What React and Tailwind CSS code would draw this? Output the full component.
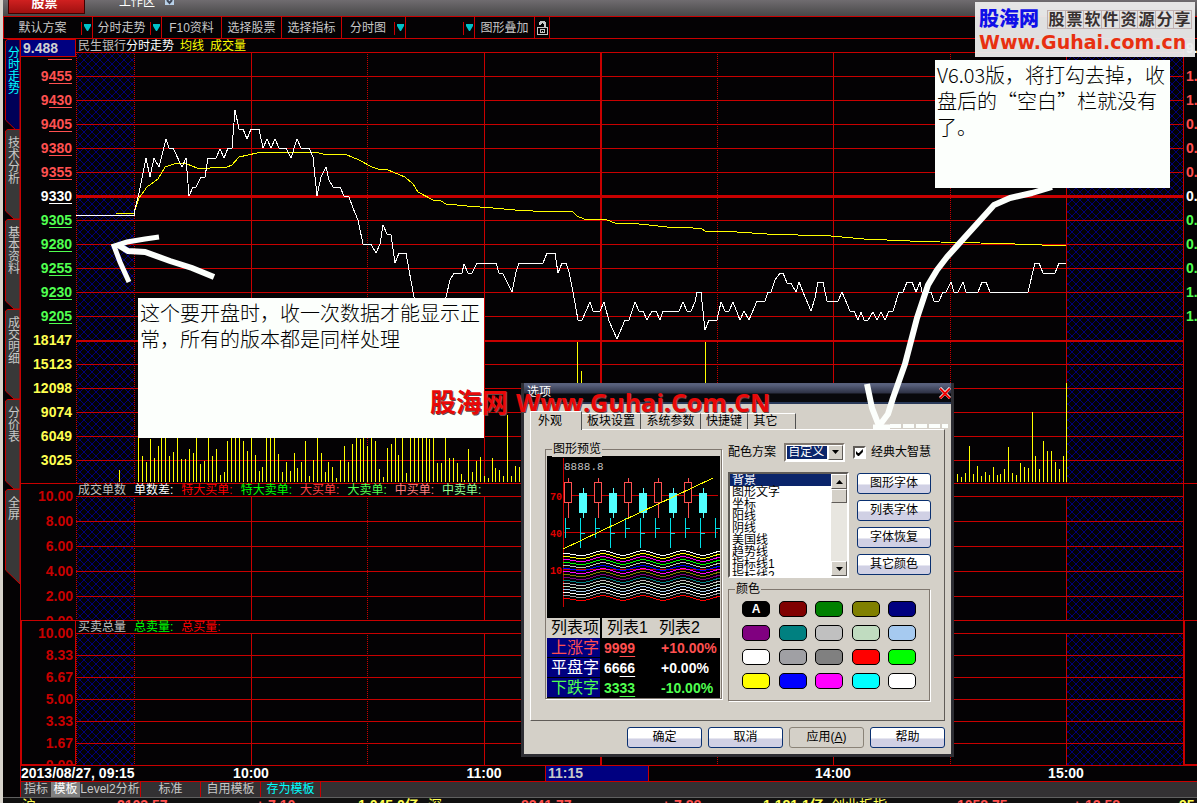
const RED = '#c80000';

const TOOLBAR = [
  { label: '默认方案', width: 'w-[89px]', menu: true },
  { label: '分时走势', width: 'w-[69px]', menu: true },
  { label: 'F10资料', width: 'w-[60px]' },
  { label: '选择股票', width: 'w-[60px]' },
  { label: '选择指标', width: 'w-[60px]' },
  { label: '分时图', width: 'w-[64px]', menu: true },
  { label: '', width: 'w-[69px]', menu: true },
  { label: '图形叠加', width: 'w-[60px]' },
];

const SIDE_TABS = ['分时走势', '技术分析', '基本资料', '成交明细', '分价表', '全屏'];

const UP = 'text-[#ff5050]';
const DOWN = 'text-[#50ff50]';

const PRICES = [
  { value: '9455', change: '1.', color: UP },
  { value: '9430', change: '1.', color: UP },
  { value: '9405', change: '0.', color: UP },
  { value: '9380', change: '0.', color: UP },
  { value: '9355', change: '0.', color: UP },
  { value: '9330', change: '0.', color: 'text-white' },
  { value: '9305', change: '0.', color: DOWN },
  { value: '9280', change: '0.', color: DOWN },
  { value: '9255', change: '0.', color: DOWN },
  { value: '9230', change: '1.', color: DOWN },
  { value: '9205', change: '1.', color: DOWN },
];

const VOLUMES = ['18147', '15123', '12098', '9074', '6049', '3025'];

const ORDER_LEGEND = [
  { label: '单数差:', color: 'text-white' },
  { label: '特大买单:', color: 'text-[#ff0000]' },
  { label: '特大卖单:', color: 'text-[#00ff00]' },
  { label: '大买单:', color: 'text-[#ff4040]' },
  { label: '大卖单:', color: 'text-[#50ff50]' },
  { label: '中买单:', color: 'text-[#ff8080]' },
  { label: '中卖单:', color: 'text-[#90ff90]' },
];

const TOTAL_LEGEND = [
  { label: '总卖量:', color: 'text-[#00ff00]' },
  { label: '总买量:', color: 'text-[#ff0000]' },
];

const PRICE_LINE =
  '76,215 134,215 134,213 139,193 146,158 150,177 154,158 159,167 161,159 166,139 169,148 173,148 182,167 186,158 189,196 193,187 196,187 201,177 205,177 208,158 216,158 220,149 224,158 228,148 232,148 235,110 239,129 243,129 247,139 251,129 259,129 263,148 267,139 271,148 275,139 279,148 286,148 291,158 297,139 301,148 309,148 313,157 317,196 321,177 326,167 329,180 333,187 340,187 344,196 349,197 353,208 358,220 363,244 371,244 376,253 380,244 383,225 387,234 391,235 395,263 399,253 406,253 409,270 414,297 420,330 440,330 446,297 450,280 454,273 462,273 464,264 468,273 472,273 477,263 496,263 499,273 503,274 512,292 516,272 519,263 543,263 547,253 555,253 558,273 562,263 566,263 569,272 573,292 578,320 582,320 586,311 590,302 593,311 600,311 604,302 609,321 617,339 625,320 629,320 635,302 639,311 643,311 647,320 652,311 656,311 660,320 663,311 679,311 683,302 687,311 691,311 695,302 697,292 701,292 705,330 709,320 717,320 721,302 725,311 729,311 733,302 740,320 744,311 749,320 757,301 765,301 768,292 771,292 775,280 780,273 783,273 787,283 791,283 796,292 799,282 803,292 811,311 815,298 818,282 823,282 827,301 838,301 842,292 850,311 854,311 858,320 861,312 864,320 868,320 873,312 877,320 881,312 885,320 889,311 893,311 899,292 903,292 907,282 912,282 916,292 920,282 923,297 928,292 931,292 934,301 939,301 943,292 946,292 951,282 954,292 958,292 963,282 966,292 978,292 982,282 986,282 990,292 1028,292 1035,263 1039,263 1043,273 1055,273 1059,263 1066,263';

const AVERAGE_LINE =
  '116,214 134,213 139,198 147,187 158,179 165,167 177,163 187,164 197,168 205,169 216,167 227,167 232,165 239,157 257,153 277,152 315,152 323,154 347,155 359,160 372,167 378,169 388,170 400,175 405,177 413,184 418,192 433,200 441,201 446,204 467,206 493,208 515,210 533,211 572,211 577,216 584,219 607,220 615,223 630,223 667,227 693,228 702,229 705,231 737,232 767,234 798,235 820,235 864,239 910,241 940,242 980,243 1015,244 1042,245 1066,245';

// [x, top] of every volume bar
const VOLUME_BARS = [
  [119, 470], [138, 430], [142, 456], [146, 462], [150, 439], [154, 458], [158, 446], [161, 430], [165, 430],
  [169, 456], [173, 452], [177, 430], [181, 459], [185, 459], [189, 449], [193, 453], [196, 430], [200, 464],
  [204, 461], [208, 430], [212, 456], [216, 449], [220, 475], [224, 472], [227, 441], [231, 430], [235, 430],
  [239, 430], [243, 441], [247, 451], [251, 430], [255, 455], [259, 471], [262, 467], [266, 430], [270, 430],
  [274, 430], [278, 454], [282, 472], [286, 462], [290, 471], [294, 453], [297, 468], [301, 462], [305, 441],
  [309, 476], [313, 460], [317, 430], [321, 453], [325, 472], [328, 462], [332, 467], [336, 478], [340, 460],
  [344, 446], [348, 462], [352, 444], [356, 430], [360, 439], [363, 430], [367, 446], [371, 430], [375, 441],
  [379, 469], [383, 477], [387, 448], [391, 444], [395, 430], [398, 455], [402, 430], [406, 473], [410, 430],
  [414, 430], [418, 430], [422, 430], [426, 430], [429, 439], [433, 430], [437, 463], [441, 463], [445, 430],
  [449, 458], [453, 458], [457, 463], [461, 474], [464, 480], [468, 449], [472, 472], [476, 461], [480, 457],
  [484, 476], [488, 478], [492, 458], [495, 468], [499, 470], [503, 476], [507, 415], [511, 476], [515, 466],
  [519, 467], [577, 342], [581, 371], [705, 342], [957, 474], [961, 477], [965, 473], [969, 446], [973, 474],
  [977, 466], [981, 476], [985, 472], [989, 475], [993, 467], [997, 475], [1000, 474], [1004, 469], [1008, 447],
  [1012, 473], [1016, 475], [1020, 463], [1024, 467], [1028, 468], [1032, 412], [1035, 456], [1039, 469],
  [1043, 441], [1047, 451], [1051, 451], [1055, 462], [1059, 469], [1063, 456], [1066, 383],
];

const WAVE_COLORS = [
  '#ffffff', '#ffff00', '#ff00ff', '#00ff00', '#c0c0c0', '#0000ff', '#ff00ff', '#808000',
  '#800080', '#008080', '#c0c0c0', '#c0dcc0', '#a6caf0', '#ffffff', '#a0a0a4', '#ff0000',
];

const LIST_ITEMS = ['背景', '图形文字', '坐标', '阳线', '阴线', '美国线', '趋势线', '指标线1', '指标线2'];

const SWATCHES = [
  'bg-black', 'bg-[#800000]', 'bg-[#008000]', 'bg-[#808000]', 'bg-[#000080]',
  'bg-[#800080]', 'bg-[#008080]', 'bg-[#c0c0c0]', 'bg-[#c0dcc0]', 'bg-[#a6caf0]',
  'bg-white', 'bg-[#a0a0a4]', 'bg-[#808080]', 'bg-[#ff0000]', 'bg-[#00ff00]',
  'bg-[#ffff00]', 'bg-[#0000ff]', 'bg-[#ff00ff]', 'bg-[#00ffff]', 'bg-white',
];

const SAMPLE_ROWS = [
  { label: '上涨字', value: '9999', rate: '+10.00%', color: UP },
  { label: '平盘字', value: '6666', rate: '+0.00%', color: 'text-white' },
  { label: '下跌字', value: '3333', rate: '-10.00%', color: DOWN },
];

function Underlined({ value }) {
  return (
    <span className="flex leading-[14px]">
      {value.slice(0, -3)}
      <span className="border-b border-current">{value.slice(-3)}</span>
    </span>
  );
}

function Grid({ id, top, height, rows, children }) {
  const bottom = top + height;
  return (
    <svg
      viewBox={`76 ${top} 1107 ${height}`}
      preserveAspectRatio="none"
      shapeRendering="crispEdges"
      className="block w-full"
      height={height}
      aria-hidden="true"
    >
      <defs>
        <pattern id={id} width="8" height="8" patternUnits="userSpaceOnUse">
          <path d="M0 0L8 8M8 0L0 8" stroke="#000078" strokeWidth="1" fill="none" />
        </pattern>
      </defs>
      <rect x="77" y={top} width="57" height={height} fill={`url(#${id})`} />
      <rect x="1067" y={top} width="116" height={height} fill={`url(#${id})`} />
      {rows.map(([y, h]) => (
        <rect key={y} x="76" y={y} width="1107" height={h} fill={RED} />
      ))}
      {[76, 134, 367, 717, 950].map((x) => (
        <path key={x} d={`M${x + 0.5} ${top}V${bottom}`} stroke={RED} strokeDasharray="1 1" />
      ))}
      {[251, 484, 833, 1066].map((x) => (
        <rect key={x} x={x} y={top} width="1" height={height} fill={RED} />
      ))}
      <rect x="600" y={top} width="2" height={height} fill={RED} />
      {children}
    </svg>
  );
}

function Toolbar() {
  return (
    <nav className="ml-[3px] flex h-[23px] border-y border-l border-[#c80000] text-[#c8c8c8]">
      {TOOLBAR.map((item, i) => (
        <button key={i} className={`flex shrink-0 items-center border-r border-[#c80000] pt-px ${item.width}`}>
          <span className="flex-1 text-center whitespace-nowrap">{item.label}</span>
          {item.menu && (
            <span className="flex h-[13px] w-[11px] items-start justify-center border-l border-[#c80000] pt-[2px]">
              <svg width="7" height="7" viewBox="0 0 7 7" aria-hidden="true">
                <path d="M0 0H7V2L4 7H3L0 2Z" fill="#00c0c8" />
              </svg>
            </span>
          )}
        </button>
      ))}
      <button aria-label="锁定" className="flex w-[15px] items-center justify-center border-r border-[#c80000]">
        <svg width="11" height="14" viewBox="0 0 11 14" fill="none" stroke="#c8c8c8" shapeRendering="crispEdges" aria-hidden="true">
          <path d="M3 4V2H4V1H7V2H8V6" strokeWidth="2" />
          <path d="M.5 6.500H10.500V13.500H.5ZM3.500 8.500H7.500V11.500H3.500ZM5 10H6" />
        </svg>
      </button>
    </nav>
  );
}

function SideTabs() {
  return (
    <nav className="flex w-[16px] shrink-0 flex-col border-r border-[#c80000]">
      {SIDE_TABS.map((label, i) => (
        <button
          key={label}
          className={`relative flex h-[90px] w-full items-start justify-center pt-[7px] ${i === 0 ? 'text-[#00ffff]' : 'text-[#c8c8c8]'}`}
        >
          <svg className="absolute left-0 top-0" width="15" height="97" viewBox="0 0 15 97" aria-hidden="true">
            <path
              d={i === 0 || i === 5 ? 'M2.5 .5H15V95L.5 81V2Z' : 'M2.5 .5H15V90H9L.5 82V2Z'}
              fill={i === 0 ? '#000058' : '#383838'}
              stroke={RED}
            />
          </svg>
          <span className="relative leading-[14px] [writing-mode:vertical-rl]">{label}</span>
        </button>
      ))}
    </nav>
  );
}

function Legend({ title, items }) {
  return (
    <div className="flex h-[12px] gap-2 pl-[2px] leading-[12px] whitespace-nowrap">
      <span className="text-[#c0c0c0]">{title}</span>
      {items.map((item) => (
        <span key={item.label} className={item.color}>{item.label}</span>
      ))}
    </div>
  );
}

function PricePanel() {
  return (
    <section className="flex">
      <div className="w-[55px] shrink-0 text-right text-[14px] font-bold">
        <div className="h-[18px] border border-l-0 border-[#c80000] bg-[#000080] pl-[2px] text-left leading-[17px] text-[#d0d0d0]">
          9.488
        </div>
        <div className="mr-1 ml-[27px] h-[3px] border-b border-[#ff5050]" />
        <div className="mt-1 pr-1">
          {PRICES.map((row) => (
            <div key={row.value} className={`flex h-6 items-center justify-end ${row.color}`}>
              <Underlined value={row.value} />
            </div>
          ))}
          {VOLUMES.map((value) => (
            <div key={value} className="h-6 leading-6 text-[#ffff50]">{value}</div>
          ))}
        </div>
      </div>
      <div className="min-w-0 flex-1">
        <h1 className="flex h-[13px] gap-[6px] pl-[2px] leading-[15px] whitespace-nowrap text-[#ffff00]">
          <span className="text-[#c0c0c0]">民生银行<span className="text-white">分时走势</span></span>
          <span>均线</span>
          <span>成交量</span>
        </h1>
        <Grid
          id="hatch-price"
          top={52}
          height={431}
          rows={[
            [52, 1], [76, 1], [100, 1], [124, 1], [148, 1], [172, 1], [195, 3], [220, 1], [244, 1], [268, 1],
            [292, 1], [316, 1], [340, 2], [364, 1], [388, 1], [412, 1], [436, 1], [460, 1],
          ]}
        >
          {VOLUME_BARS.map(([x, y]) => (
            <rect key={x} x={x} y={y} width="1" height={482 - y} fill="#ffff00" />
          ))}
          <polyline points={AVERAGE_LINE} fill="none" stroke="#ffff00" />
          <polyline points={PRICE_LINE} fill="none" stroke="#ffffff" />
        </Grid>
      </div>
      <div className="w-[14px] shrink-0 overflow-hidden border-l border-[#c80000] pl-[2px] text-[14px] font-bold">
        <div className="mb-[7px] h-[18px] leading-[18px] text-white">9.</div>
        {PRICES.map((row) => (
          <div key={row.value} className={`h-6 leading-6 ${row.color}`}>{row.change}</div>
        ))}
      </div>
    </section>
  );
}

function TimeAxis() {
  return (
    <div className="grid h-[17px] grid-cols-[172fr_116fr_117fr_116fr_3fr_104fr_126fr_116fr_117fr_116fr_73fr] border-y border-[#c80000] text-center text-[14px] leading-[15px] font-bold whitespace-nowrap">
      <span className="text-left">2013/08/27, 09:15</span>
      <span>10:00</span>
      <span />
      <span>11:00</span>
      <span />
      <span className="border-x border-[#c80000] bg-[#000080] pl-[2px] text-left text-[#c8c8c8]">11:15</span>
      <span />
      <span>14:00</span>
      <span />
      <span>15:00</span>
    </div>
  );
}

function TemplateTabs() {
  return (
    <nav className="flex h-[15px] bg-[#333133] leading-[15px] whitespace-nowrap text-[#c8c8c8]">
      <button className="w-[30px]">指标</button>
      <button className="w-[29px] bg-[#808080] text-white">模板</button>
      <button className="w-[61px] border-r border-[#c80000]">Level2分析</button>
      <button className="w-[60px] border-r border-[#c80000]">标准</button>
      <button className="w-[60px] border-r border-[#c80000]">自用模板</button>
      <button className="w-[60px] border-r border-[#c80000] text-[#00ffff]">存为模板</button>
    </nav>
  );
}

function Ticker() {
  return (
    <footer className="flex h-[6px] overflow-hidden border-t border-[#606060] bg-[#101010] pt-px pl-[22px] text-[14px] leading-[13px] font-bold whitespace-nowrap text-[#ff5050]">
      <span className="w-[95px] font-normal text-[#ffff50]">沪</span>
      <span className="w-[139px]">2103.57</span>
      <span className="w-[102px]">+ 7.10</span>
      <span className="w-[70px] text-[#ffff50]">1,045.0亿</span>
      <span className="w-[93px] font-normal text-[#ffff50]">深</span>
      <span className="w-[141px]">8241.77</span>
      <span className="w-[101px]">+ 7.88</span>
      <span className="w-[68px] text-[#ffff50]">1,181.1亿</span>
      <span className="w-[126px] font-normal text-[#ffff50]">创业板指</span>
      <span className="w-[116px]">1058.75</span>
      <span className="w-[106px]">+ 12.58</span>
      <span className="text-[#ffff50]">95</span>
    </footer>
  );
}

function Preview() {
  return (
    <svg viewBox="547 456 173 162" className="block w-full bg-black" shapeRendering="crispEdges" aria-hidden="true">
      <path d="M563.5 458V607M563 495.5H718M563 532.5H718M563 569.5H720" stroke={RED} />
      <g fontFamily="'Liberation Mono', monospace" fontSize="11">
        <text x="564" y="470" fill="#c0c0c0">8888.8</text>
        <g fill="#e00000" fontSize="10" fontWeight="bold">
          <text x="550" y="500">70</text>
          <text x="550" y="537">40</text>
          <text x="550" y="574">10</text>
        </g>
      </g>
      {[0, 30, 60, 90, 120].map((dx) => (
        <g key={dx}>
          <path d={`M${568.5 + dx} 478V482M${568.5 + dx} 502V518`} stroke="#ff5050" />
          <rect x={564.5 + dx} y="482.5" width="7" height="20" fill="#000" stroke="#ff5050" />
          <path d={`M${583.5 + dx} 488V518`} stroke="#50ffff" />
          <rect x={579 + dx} y="493" width="8" height="20" fill="#50ffff" />
        </g>
      ))}
      {[0, 30, 60, 90, 120, 150].map((dx) => (
        <path key={dx} d={`M${565.5 + dx} 518V538M${565 + dx} 528.5h5M${580.5 + dx} 518V548M${580 + dx} 533.5h5`} stroke="#00e0e8" />
      ))}
      <path d="M563 549L713 478" stroke="#ffff00" />
      {WAVE_COLORS.map((color, i) => (
        <polyline
          key={i}
          transform={`translate(0 ${i * 3})`}
          points="563,553 583,556 603,550 623,556 643,550 663,556 683,550 703,556 720,551"
          fill="none"
          stroke={color}
        />
      ))}
    </svg>
  );
}

function PushButton({ children, className = '', disabled }) {
  return (
    <button
      disabled={disabled}
      className={`h-[21px] rounded-[3px] border text-center leading-[19px] text-black ${
        disabled ? 'border-[#8a8378] bg-[#d4d0c8]' : 'border-[#0a3070] bg-linear-to-b from-white from-50% to-[#d0d0e4] to-60%'
      } ${className}`}
    >
      {children}
    </button>
  );
}

function ScrollArrow({ up }) {
  return (
    <button
      aria-label={up ? '上移' : '下移'}
      className="flex h-[15px] w-full items-center justify-center border border-t-white border-r-[#605c58] border-b-[#605c58] border-l-white bg-[#d4d0c8]"
    >
      <svg width="7" height="4" viewBox="0 0 7 4" aria-hidden="true">
        <path d={up ? 'M0 4L3.5 0L7 4Z' : 'M0 0L3.5 4L7 0Z'} />
      </svg>
    </button>
  );
}

function OptionsDialog() {
  const tab = 'mt-[2px] h-[16px] border-t border-r border-t-white border-r-[#505050] leading-[15px]';
  return (
    <div
      role="dialog"
      aria-label="选项"
      className="absolute top-[383px] left-[521px] w-[433px] border-x-[3px] border-b-[3px] border-[#2e2e34] bg-[#d4d0c8] text-black"
    >
      <header className="flex h-[21px] items-center justify-between border-b-2 border-[#283858] bg-linear-to-b from-[#58607c] from-10% via-[#303448] via-50% to-[#08080c] to-60% pl-[3px] text-white">
        <h2>选项</h2>
        <button aria-label="关闭">
          <svg width="12" height="12" viewBox="0 0 12 12" fill="none" aria-hidden="true">
            <path d="M1 1L11 11M11 1L1 11" stroke="#fff" strokeWidth="3" />
            <path d="M1 1.500L11 11.500M11 1.500L1 11.500" stroke="#f00000" strokeWidth="2" />
          </svg>
        </button>
      </header>

      <div className="p-[6px] pt-[7px]">
        <div role="tablist" className="flex h-[18px] whitespace-nowrap">
          <button role="tab" aria-selected="true" className="relative z-10 h-[19px] w-[52px] border-t border-r border-l border-t-white border-r-[#505050] border-l-white bg-[#d4d0c8] pr-3 leading-[15px]">
            外观
          </button>
          <button role="tab" className={`w-[59px] ${tab}`}>板块设置</button>
          <button role="tab" className={`w-[60px] ${tab}`}>系统参数</button>
          <button role="tab" className={`w-[47px] ${tab}`}>快捷键</button>
          <button role="tab" className={`w-[48px] pr-3 ${tab}`}>其它</button>
        </div>

        <div className="flex items-start gap-[6px] border border-t-white border-r-[#605c58] border-b-[#605c58] border-l-white pt-[12px] pr-[13px] pb-[19px] pl-[14px]">
          <fieldset className="relative mt-[7px] w-[177px] border border-[#807870] p-px pt-[6px] pb-0 shadow-[1px_1px_0_#fff]">
            <legend className="absolute -top-[8px] left-[6px] bg-[#d4d0c8] px-px leading-[15px]">图形预览</legend>
            <div className="bg-black">
              <Preview />
              <table className="w-full table-fixed border-separate border-spacing-0 text-[14px] font-bold">
                <colgroup>
                  <col className="w-[55px]" />
                  <col className="w-[52px]" />
                  <col />
                </colgroup>
                <thead>
                  <tr className="h-[20px] bg-[#d4d0c8] text-left text-[16px] leading-[20px] whitespace-nowrap">
                    <th className="border-r-2 border-black p-0 pl-1 font-normal">列表项</th>
                    <th className="p-0 pl-[5px] font-normal">列表1</th>
                    <th className="p-0 pl-[5px] font-normal">列表2</th>
                  </tr>
                </thead>
                <tbody>
                  {SAMPLE_ROWS.map((row) => (
                    <tr key={row.label} className={`h-[20px] leading-[18px] ${row.color}`}>
                      <th className="border-r-2 border-b border-black bg-[#000080] p-0 pl-1 text-left text-[16px] font-normal whitespace-nowrap">{row.label}</th>
                      <td className="p-0 pl-[2px]">
                        {row.value.slice(0, 2)}<span className="underline underline-offset-3">{row.value.slice(2)}</span>
                      </td>
                      <td className="p-0 pl-[7px]">{row.rate}</td>
                    </tr>
                  ))}
                </tbody>
              </table>
            </div>
          </fieldset>

          <div className="min-w-0 flex-1">
            <div className="flex h-[20px] items-center whitespace-nowrap">
              <label htmlFor="scheme" className="w-[57px]">配色方案</label>
              <div className="flex h-[19px] w-[62px] border-2 border-t-[#807870] border-r-white border-b-white border-l-[#807870] bg-white">
                <select id="scheme" className="min-w-0 flex-1 appearance-none border border-white bg-[#0a246a] px-px leading-[13px] text-white">
                  <option>自定义</option>
                </select>
                <span className="w-[15px]"><ScrollArrow /></span>
              </div>
              <input
                id="classic"
                type="checkbox"
                defaultChecked
                className="peer ml-2 size-[13px] appearance-none border-2 border-t-[#605c58] border-r-white border-b-white border-l-[#605c58] bg-white"
              />
              <svg className="pointer-events-none -ml-[10px]" width="7" height="7" viewBox="0 0 7 7" aria-hidden="true">
                <path d="M0 2V5L2 7H3L7 3V0L3 4H2Z" />
              </svg>
              <label htmlFor="classic" className="ml-2">经典大智慧</label>
            </div>

            <div className="mt-[10px] flex justify-between">
              <div className="flex h-[106px] w-[121px] border-2 border-t-[#605c58] border-r-white border-b-white border-l-[#605c58] bg-white">
                <ul role="listbox" aria-label="颜色项目" className="h-full flex-1 overflow-hidden">
                  {LIST_ITEMS.map((item, i) => (
                    <li
                      key={item}
                      role="option"
                      aria-selected={i === 0}
                      className={`h-[12px] pl-[2px] leading-[12px] ${i === 0 ? 'bg-[#0a246a] text-white' : ''}`}
                    >
                      {item}
                    </li>
                  ))}
                </ul>
                <div className="flex w-[16px] flex-col bg-[#e8e6e0]">
                  <ScrollArrow up />
                  <div className="mb-auto h-[14px] border border-t-white border-r-[#605c58] border-b-[#605c58] border-l-white bg-[#d4d0c8]" />
                  <ScrollArrow />
                </div>
              </div>
              <div className="flex w-[74px] flex-col gap-[6px] pt-px">
                <PushButton>图形字体</PushButton>
                <PushButton>列表字体</PushButton>
                <PushButton>字体恢复</PushButton>
                <PushButton>其它颜色</PushButton>
              </div>
            </div>

            <fieldset className="relative mt-[11px] h-[112px] w-[202px] border border-[#807870] pt-[11px] pl-[13px] shadow-[1px_1px_0_#fff]">
              <legend className="absolute -top-[8px] left-[6px] bg-[#d4d0c8] px-px leading-[15px]">颜色</legend>
              <div className="grid w-[175px] grid-cols-5 justify-items-start gap-x-2 gap-y-2">
                {SWATCHES.map((color, i) => (
                  <button
                    key={i}
                    aria-label={`颜色${i + 1}`}
                    className={`h-[16px] w-[28px] rounded-[5px] border border-black text-[12px] leading-[14px] font-bold text-white ${color}`}
                  >
                    {i === 0 && 'A'}
                  </button>
                ))}
              </div>
            </fieldset>
          </div>
        </div>

        <div className="mt-[6px] flex justify-end gap-[6px]">
          <PushButton className="w-[75px]">确定</PushButton>
          <PushButton className="w-[75px]">取消</PushButton>
          <PushButton className="w-[75px]" disabled>应用(<u>A</u>)</PushButton>
          <PushButton className="w-[75px]">帮助</PushButton>
        </div>
      </div>
    </div>
  );
}

function Annotations() {
  const note = "absolute bg-[#fcfffc] pt-[2px] pl-[2px] font-['Noto_Sans_CJK_SC',sans-serif] text-[20px] leading-[26px] font-light text-black";
  return (
    <>
      <svg className="pointer-events-none absolute top-[230px] left-[105px]" width="115" height="60" viewBox="105 230 115 60" fill="none" stroke="#fcfffc" strokeWidth="5" aria-hidden="true">
        <path d="M159 237L145 239L127 242L114 246L120 262L129 282" />
        <path d="M118 245L128 251L145 252L170 261L192 268L214 277" strokeWidth="6" />
      </svg>
      <svg className="pointer-events-none absolute top-[180px] left-[860px]" width="210" height="255" viewBox="860 180 210 255" fill="none" stroke="#fcfffc" strokeWidth="5" strokeLinejoin="round" aria-hidden="true">
        <path d="M1052 187L1032 193L1010 198L994 205L975 226L947 257L937 270L928 285L917 318L905 364L893 398L888 414L879 426L872 408L867 384" strokeWidth="6" />
        <path d="M873 427H890" />
        <path d="M890 426H948" strokeDasharray="11 2" strokeWidth="4" />
      </svg>
      <p className={`top-[298px] left-[138px] h-[140px] w-[346px] ${note}`}>
        这个要开盘时，收一次数据才能显示正常，所有的版本都是同样处理
      </p>
      <p className={`top-[60px] left-[935px] h-[128px] w-[235px] ${note}`}>
        V6.03版，将打勾去掉，收盘后的“空白”栏就没有了。
      </p>
      <div className="absolute top-[2px] left-[975px] h-[55px] w-[220px] bg-[#ececec]/95 pl-1 whitespace-nowrap">
        <div className="flex h-[28px] items-end gap-2">
          <b className="text-[20px] leading-[22px] font-black text-[#1010e8]">股海网</b>
          <span className="mb-px flex border-l border-[#c0b0b0] text-[16px] font-bold text-[#383030]">
            {[...'股票软件资源分享'].map((char) => (
              <span key={char} className="w-[18px] border-y border-r border-[#c0b0b0] text-center leading-[17px]">{char}</span>
            ))}
          </span>
        </div>
        <a href="#guhai" className="block font-['DejaVu_Sans',sans-serif] text-[19px] leading-[24px] font-bold text-[#e83010]">
          Www.Guhai.com.cn
        </a>
      </div>
      <div className="pointer-events-none absolute top-[384px] left-[430px] flex gap-2 font-['Open_Sans','Noto_Sans_CJK_SC',sans-serif] text-[25px] leading-[36px] font-bold whitespace-nowrap text-[#e80808] [text-shadow:1px_1px_0_#604848]">
        <span className="text-[26px]">股海网</span>
        <span>Www.Guhai.Com.CN</span>
      </div>
    </>
  );
}

export default function App() {
  return (
    <div className="relative flex min-h-screen w-full flex-col overflow-hidden bg-[#040204] font-['Liberation_Sans','Noto_Sans_CJK_SC',sans-serif] text-[12px] leading-[15px] text-white">
      <header className="ml-[3px] flex h-[16px] bg-linear-to-b from-[#706c70] to-[#484848] whitespace-nowrap">
        <div className="ml-[5px] flex h-[14px] w-[77px] items-end justify-center overflow-hidden border border-t-0 border-[#400000] bg-linear-to-b from-[#d02020] to-[#a01010] pb-[3px] pr-1 text-[13px] font-bold">
          股票
        </div>
        <div className="ml-[34px] flex h-[10px] items-end overflow-hidden">工作区</div>
        <svg className="ml-[10px]" width="9" height="6" viewBox="0 0 9 6" aria-hidden="true">
          <path d="M0 0H9V5H0Z" fill="#b8d0e8" />
          <path d="M2 0L4.500 3L7 0" fill="none" stroke="#404858" strokeWidth="2" />
        </svg>
      </header>
      <Toolbar />
      <div className="ml-[5px] flex">
        <SideTabs />
        <div className="min-w-0 flex-1">
          <PricePanel />

          <section className="flex border-t border-[#c80000]">
            <div className="h-[136px] w-[55px] shrink-0 overflow-hidden pr-[3px] text-right text-[14px] leading-[25px] font-bold text-[#c80000]">
              {['10.00', '8.00', '6.00', '4.00', '2.00', '0.00'].map((v) => <div key={v}>{v}</div>)}
            </div>
            <div className="min-w-0 flex-1">
              <Legend title="成交单数" items={ORDER_LEGEND} />
              <Grid id="hatch-orders" top={496} height={124} rows={[[496, 1], [521, 1], [546, 1], [571, 1], [596, 1]]} />
            </div>
            <div className="w-[14px] shrink-0 border-l border-[#c80000]" />
          </section>

          <section className="flex border-t border-[#c80000]">
            <div className="h-[144px] w-[55px] shrink-0 overflow-hidden border-r border-b border-l border-[#c80000] pt-px pr-[2px] text-right text-[14px] leading-[22px] font-bold text-[#c80000]">
              {['10.00', '8.33', '6.67', '5.00', '3.33', '1.67', '0.00'].map((v) => <div key={v}>{v}</div>)}
            </div>
            <div className="min-w-0 flex-1">
              <Legend title="买卖总量" items={TOTAL_LEGEND} />
              <Grid id="hatch-total" top={633} height={132} rows={[[633, 1], [655, 1], [677, 1], [699, 1], [721, 1], [743, 1]]} />
            </div>
            <div className="w-[14px] shrink-0 border-b border-l-2 border-[#c80000]" />
          </section>

          <TimeAxis />
          <TemplateTabs />
        </div>
      </div>
      <Ticker />
      <div className="absolute inset-y-0 left-0 w-[3px] bg-[#d8d4cc]" />
      <OptionsDialog />
      <Annotations />
    </div>
  );
}
